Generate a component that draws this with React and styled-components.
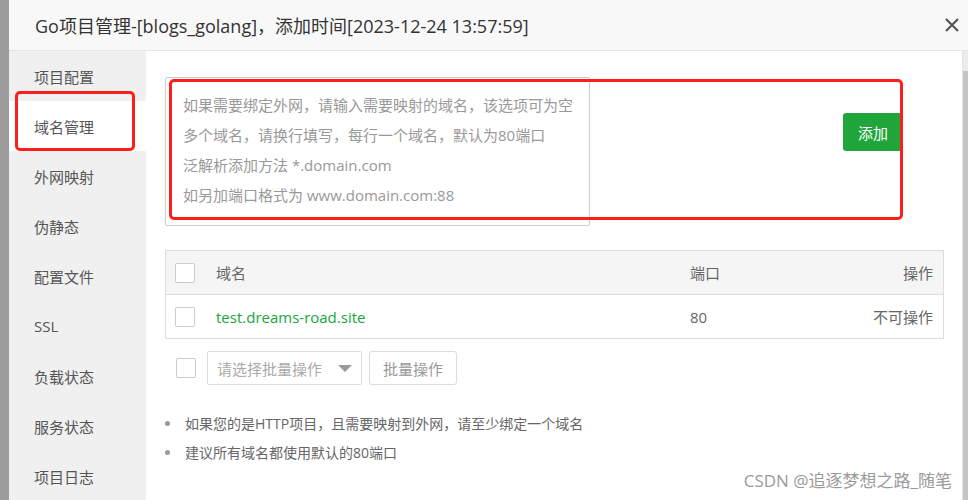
import React from 'react';
import styled, { createGlobalStyle } from 'styled-components';

const GlobalStyle = createGlobalStyle`
  body {
    margin: 0;
    overflow: hidden;
    font-family: "Open Sans", "Noto Sans CJK SC", sans-serif;
  }
`;

const Page = styled.div`
  position: relative;
  display: flex;
  width: 968px;
  height: 500px;
  overflow: hidden;
`;

const Backdrop = styled.div`
  width: 9px;
  flex-shrink: 0;
  background: #9c9c9c;
`;

const Dialog = styled.div`
  flex: 1;
  display: flex;
  flex-direction: column;
  background: #fff;
`;

const Header = styled.div`
  height: 51px;
  flex-shrink: 0;
  display: flex;
  align-items: center;
  justify-content: space-between;
  padding: 0 8px 0 26px;
  background: #f8f8f8;
  border-bottom: 1px solid #e6e6e6;
  box-sizing: border-box;
`;

const Title = styled.div`
  font-size: 18px;
  color: #333;
`;

const Close = styled.div`
  width: 16px;
  height: 16px;
  display: flex;
  cursor: pointer;
`;

const Body = styled.div`
  flex: 1;
  display: flex;
`;

const Sidebar = styled.div`
  width: 137px;
  flex-shrink: 0;
  background: #f0f0f0;
`;

const NavItem = styled.div`
  height: 50px;
  display: flex;
  align-items: center;
  padding-left: 25px;
  font-size: 15px;
  color: #555;
  background: ${(p) => (p.active ? '#fff' : 'transparent')};
`;

const Content = styled.div`
  flex: 1;
  padding: 26px 13px 0 19px;
`;

const FormRow = styled.div`
  display: flex;
  align-items: flex-start;
`;

const Domains = styled.textarea`
  width: 425px;
  height: 149px;
  flex-shrink: 0;
  box-sizing: border-box;
  padding: 12px 4px 12px 17px;
  border: 1px solid #ccc;
  border-radius: 2px;
  resize: none;
  font-family: inherit;
  font-size: 15px;
  line-height: 30px;
  outline: none;

  &::placeholder {
    color: #999;
  }
`;

const AddButton = styled.button`
  margin: 36px 0 0 253px;
  height: 38px;
  padding: 0 15px;
  border: none;
  border-radius: 3px;
  background: #20a53a;
  color: #fff;
  font-family: inherit;
  font-size: 15px;
  cursor: pointer;
`;

const Table = styled.div`
  margin-top: 24px;
  border: 1px solid #ddd;
`;

const Row = styled.div`
  display: grid;
  grid-template-columns: 50px 1fr 133px 110px;
  align-items: center;
  height: 43px;
  padding-right: 10px;
  font-size: 15px;
  color: #666;
  background: ${(p) => (p.head ? '#f5f5f5' : '#fff')};
  border-top: ${(p) => (p.head ? 'none' : '1px solid #ddd')};
`;

const Cell = styled.div`
  text-align: ${(p) => (p.right ? 'right' : 'left')};
`;

const Link = styled.span`
  color: #20a53a;
`;

const Check = styled.span`
  display: block;
  width: 18px;
  height: 18px;
  margin-left: 9px;
  border: 1px solid #ccc;
  border-radius: 2px;
  background: #fff;
`;

const BatchBar = styled.div`
  display: flex;
  align-items: center;
  gap: 7px;
  margin-top: 12px;
`;

const BatchCheck = styled(Check)`
  margin-left: 11px;
  margin-right: 4px;
`;

const Select = styled.div`
  width: 155px;
  height: 34px;
  box-sizing: border-box;
  display: flex;
  align-items: center;
  justify-content: space-between;
  padding: 0 9px;
  border: 1px solid #ddd;
  border-radius: 2px;
  font-size: 15px;
  color: #aaa;
`;

const Caret = styled.span`
  width: 0;
  height: 0;
  border-left: 7px solid transparent;
  border-right: 7px solid transparent;
  border-top: 7px solid #999;
`;

const BatchButton = styled.div`
  height: 34px;
  box-sizing: border-box;
  display: flex;
  align-items: center;
  padding: 0 13px;
  border: 1px solid #ddd;
  border-radius: 3px;
  font-size: 15px;
  color: #999;
`;

const Tips = styled.ul`
  margin: 24px 0 0;
  padding: 0 0 0 20px;
  font-size: 14px;
  color: #666;
  list-style: none;
`;

const Tip = styled.li`
  position: relative;
  height: 29px;
  line-height: 29px;

  &::before {
    content: '';
    position: absolute;
    left: -20px;
    top: 12px;
    width: 5px;
    height: 5px;
    border-radius: 50%;
    background: #999;
  }
`;

const Scrollbar = styled.div`
  width: 5px;
  flex-shrink: 0;
  margin-left: 5px;
  border-left: 1px solid #e4e4e4;
  background: linear-gradient(#ececec 0 20px, #c4c4c4 20px);
`;

const Mark = styled.div`
  position: absolute;
  left: ${(p) => p.x}px;
  top: ${(p) => p.y}px;
  width: ${(p) => p.w}px;
  height: ${(p) => p.h}px;
  box-sizing: border-box;
  border: 3px solid #ff1e1e;
  border-radius: 5px;
  pointer-events: none;
`;

const Watermark = styled.div`
  position: absolute;
  right: 16px;
  bottom: 8px;
  font-size: 17px;
  color: #9a9a9a;
`;

const navItems = ['项目配置', '域名管理', '外网映射', '伪静态', '配置文件', 'SSL', '负载状态', '服务状态', '项目日志'];

const placeholder = [
  '如果需要绑定外网，请输入需要映射的域名，该选项可为空',
  '多个域名，请换行填写，每行一个域名，默认为80端口',
  '泛解析添加方法 *.domain.com',
  '如另加端口格式为 www.domain.com:88',
].join('\n');

export default function App() {
  return (
    <Page>
      <GlobalStyle />
      <Backdrop />
      <Dialog>
        <Header>
          <Title>Go项目管理-[blogs_golang]，添加时间[2023-12-24 13:57:59]</Title>
          <Close>
            <svg width="16" height="16" viewBox="0 0 16 16">
              <path d="M2 2 L14 14 M14 2 L2 14" stroke="#555" strokeWidth="2.2" />
            </svg>
          </Close>
        </Header>
        <Body>
          <Sidebar>
            {navItems.map((name) => (
              <NavItem key={name} active={name === '域名管理'}>
                {name}
              </NavItem>
            ))}
          </Sidebar>
          <Content>
            <FormRow>
              <Domains placeholder={placeholder} />
              <AddButton>添加</AddButton>
            </FormRow>
            <Table>
              <Row head>
                <Check />
                <Cell>域名</Cell>
                <Cell>端口</Cell>
                <Cell right>操作</Cell>
              </Row>
              <Row>
                <Check />
                <Cell>
                  <Link>test.dreams-road.site</Link>
                </Cell>
                <Cell>80</Cell>
                <Cell right>不可操作</Cell>
              </Row>
            </Table>
            <BatchBar>
              <BatchCheck />
              <Select>
                请选择批量操作
                <Caret />
              </Select>
              <BatchButton>批量操作</BatchButton>
            </BatchBar>
            <Tips>
              <Tip>如果您的是HTTP项目，且需要映射到外网，请至少绑定一个域名</Tip>
              <Tip>建议所有域名都使用默认的80端口</Tip>
            </Tips>
          </Content>
          <Scrollbar />
        </Body>
      </Dialog>
      <Mark x={15} y={91} w={120} h={60} />
      <Mark x={169} y={79} w={734} h={141} />
      <Watermark>CSDN @追逐梦想之路_随笔</Watermark>
    </Page>
  );
}
